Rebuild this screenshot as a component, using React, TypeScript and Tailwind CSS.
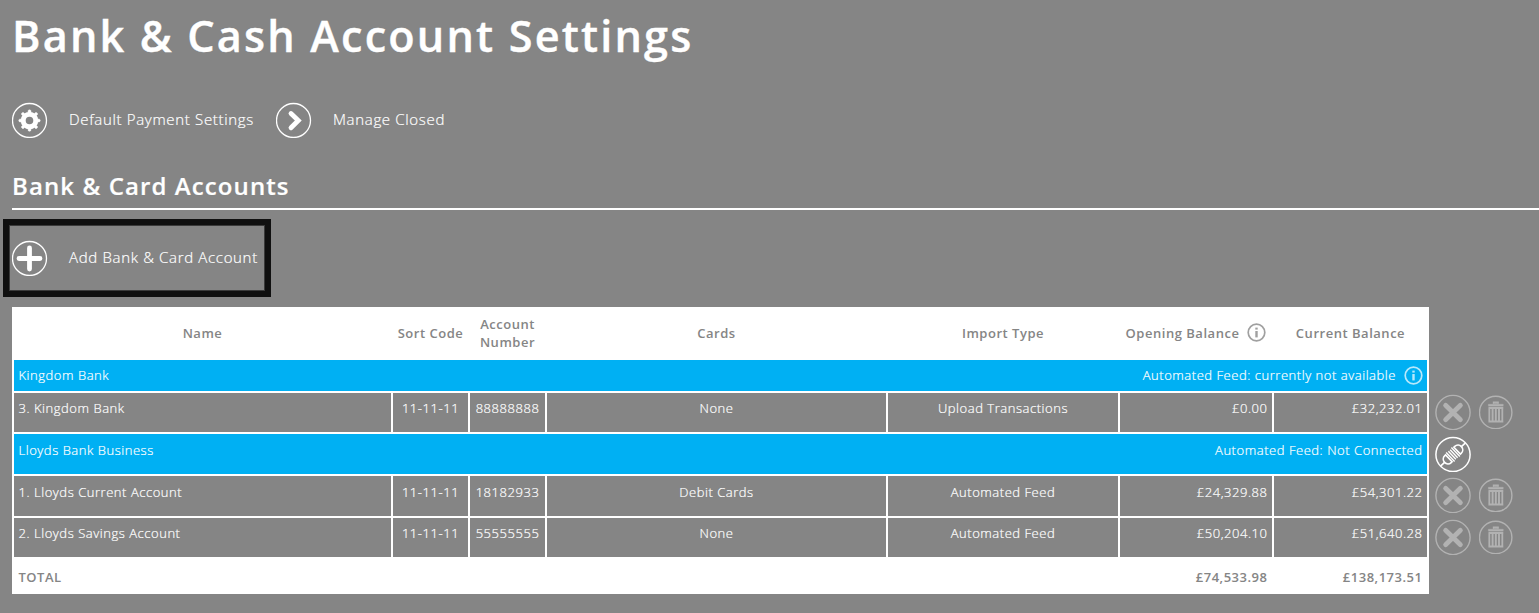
import type { ReactNode } from "react";

const cols = "grid grid-cols-[377px_75px_75px_339px_230px_152px_153px] gap-x-[2px]";
const light = "font-light tracking-[0.54px] [-webkit-text-stroke:0.2px_white]";
const action = "text-[15px] leading-5 font-light tracking-[0.67px] whitespace-nowrap [-webkit-text-stroke:0.2px_white]";

function Ring({ children }: { children: ReactNode }) {
  return (
    <svg width="36" height="36" viewBox="0 0 36 36" fill="none" stroke="currentColor" className="block shrink-0">
      <circle cx="17.5" cy="18.5" r="17" strokeWidth="1.3" />
      {children}
    </svg>
  );
}

function GearIcon() {
  const teeth = [0, 45, 90, 135, 180, 225, 270, 315];
  return (
    <Ring>
      <circle cx="17.5" cy="18.5" r="6.3" strokeWidth="5" />
      {teeth.map((a) => (
        <circle key={a} cx="17.5" cy="9.3" r="1.5" transform={`rotate(${a} 17.5 18.5)`} fill="currentColor" strokeWidth=".5" />
      ))}
    </Ring>
  );
}

function ChevronIcon() {
  return (
    <Ring>
      <path d="M15 11.5l7.3 7-7.3 7.2" strokeWidth="4.8" strokeLinecap="round" />
    </Ring>
  );
}

function PlusIcon() {
  return (
    <Ring>
      <path d="M17.5 8v21M7 18.5h21" strokeWidth="4.8" strokeLinecap="round" />
    </Ring>
  );
}

function InfoIcon() {
  return (
    <svg width="19" height="19" viewBox="0 0 19 19" fill="none" stroke="currentColor" className="block shrink-0">
      <circle cx="9.5" cy="9.5" r="8.3" strokeWidth="1.7" />
      <path d="M9.5 8v6.4" strokeWidth="2.4" />
      <path d="M9.5 4.6v2" strokeWidth="2.4" />
    </svg>
  );
}

function CloseIcon() {
  return (
    <svg width="36" height="36" viewBox="0 0 36 36" fill="none" stroke="currentColor" className="block shrink-0">
      <circle cx="18" cy="18.5" r="17.1" strokeWidth="1.4" />
      <path d="M10.6 11.3l14.8 14.4M25.4 11.3L10.6 25.7" strokeWidth="4.8" strokeLinecap="round" />
    </svg>
  );
}

function TrashIcon() {
  return (
    <svg width="34" height="34" viewBox="0 0 34 34" fill="none" stroke="currentColor" className="block shrink-0">
      <circle cx="16.7" cy="17.5" r="16.2" strokeWidth="1.4" />
      <path d="M9.3 9.2h15v2h-15z" fill="currentColor" strokeWidth=".3" />
      <path d="M14.4 8.7V7.2h4.8v1.5" fill="currentColor" strokeWidth="1.2" />
      <path d="M10.3 12.8v13.8h13V12.8M9.5 13h14.8M9.5 26.5h14.8" strokeWidth="1.8" />
      <path d="M13.6 13V26.5M16.8 13V26.5M20 13V26.5" strokeWidth="1.9" />
    </svg>
  );
}

function PlugIcon() {
  return (
    <svg width="36" height="36" viewBox="0 0 36 36" fill="none" stroke="currentColor" className="block shrink-0">
      <circle cx="18" cy="18.5" r="17.1" strokeWidth="1.5" />
      <g transform="rotate(-43 18 18.5)" strokeWidth="1.6">
        <path d="M1 18.5h5.5M29.5 18.5H35" />
        <path d="M12.3 13.8h-1.1c-2.9 0-4.7 2.1-4.7 4.7s1.8 4.7 4.7 4.7h1.1z" />
        <path d="M23.7 13.8h1.1c2.9 0 4.7 2.1 4.7 4.7s-1.8 4.7-4.7 4.7h-1.1z" />
        <path d="M14.4 12.3v12.4M21.6 12.3v12.4M16.8 13v11M19.2 13v11" strokeWidth="1.4" />
      </g>
    </svg>
  );
}

function RowActions() {
  return (
    <div className="flex h-9 items-center gap-2 text-[#b2b2b2]">
      <CloseIcon />
      <TrashIcon />
    </div>
  );
}

type Account = { name: string; sort: string; num: string; cards: string; type: string; open: string; current: string };

function AccountRow({ a, size }: { a: Account; size: string }) {
  return (
    <div className={`${cols} ${size} ${light} text-white *:bg-[#858585] *:px-[4.5px]`}>
      <div>{a.name}</div>
      <div className="text-center">{a.sort}</div>
      <div className="text-center">{a.num}</div>
      <div className="text-center">{a.cards}</div>
      <div className="text-center">{a.type}</div>
      <div className="text-right">{a.open}</div>
      <div className="text-right">{a.current}</div>
    </div>
  );
}

const kingdom = { name: "3. Kingdom Bank", sort: "11-11-11", num: "88888888", cards: "None", type: "Upload Transactions", open: "£0.00", current: "£32,232.01" };
const lloydsCurrent = { name: "1. Lloyds Current Account", sort: "11-11-11", num: "18182933", cards: "Debit Cards", type: "Automated Feed", open: "£24,329.88", current: "£54,301.22" };
const lloydsSavings = { name: "2. Lloyds Savings Account", sort: "11-11-11", num: "55555555", cards: "None", type: "Automated Feed", open: "£50,204.10", current: "£51,640.28" };

export default function App() {
  return (
    <main className="h-[613px] w-[1539px] overflow-hidden bg-[#858585] pl-3 font-['Open_Sans',sans-serif] text-white">
      <h1 className="h-[102px] pt-[6px] text-[43.2px] leading-[60px] font-semibold tracking-[2.18px] whitespace-nowrap [-webkit-text-stroke:0.4px_white]">
        Bank &amp; Cash Account Settings
      </h1>
      <nav className={`flex h-9 items-center ${action}`}>
        <a className="flex w-[264px] items-center gap-[21px]">
          <GearIcon />
          <span className="pb-[2px]">Default Payment Settings</span>
        </a>
        <a className="flex items-center gap-[21px]">
          <ChevronIcon />
          <span className="pb-[2px]">Manage Closed</span>
        </a>
      </nav>
      <h2 className="mt-8 h-[40px] border-b-2 border-white text-[24px] leading-[32px] font-semibold tracking-[1.1px] [-webkit-text-stroke:0.2px_white]">
        Bank &amp; Card Accounts
      </h2>
      <div className={`mt-[9px] -ml-[9px] flex h-[78px] w-[268px] items-center gap-[21px] border-[6px] border-[#101010] pl-[3px] shadow-[inset_0_0_0_1px_#101010a0] ${action}`}>
        <PlusIcon />
        <span className="pb-[2px]">Add Bank &amp; Card Account</span>
      </div>

      <div className="mt-[10px] flex gap-[6px]">
        <section className="flex h-[287px] w-[1417px] flex-col gap-[2px] bg-white px-[2px] text-[13px] leading-[18px] tracking-[0.52px]">
          <div className={`${cols} h-[51px] items-center text-center font-semibold text-[#858585]`}>
            <div>Name</div>
            <div>Sort Code</div>
            <div>Account Number</div>
            <div>Cards</div>
            <div>Import Type</div>
            <div className="flex items-center justify-center gap-2 whitespace-nowrap">
              Opening Balance
              <span className="text-[#a0a0a0]"><InfoIcon /></span>
            </div>
            <div>Current Balance</div>
          </div>
          <div className={`flex h-[31px] items-center justify-between bg-[#00b0f3] pr-[4px] pl-[4.5px] ${light}`}>
            <span className="pb-px">Kingdom Bank</span>
            <span className="flex items-center gap-2">
              <span className="pb-px">Automated Feed: currently not available</span>
              <span className="text-[#b8e8fb]"><InfoIcon /></span>
            </span>
          </div>
          <AccountRow a={kingdom} size="h-[39px] *:pt-[6px]" />
          <div className={`flex h-[40px] justify-between bg-[#00b0f3] px-[4.5px] pt-[7px] ${light}`}>
            <span>Lloyds Bank Business</span>
            <span>Automated Feed: Not Connected</span>
          </div>
          <AccountRow a={lloydsCurrent} size="h-[40px] *:pt-[7px]" />
          <AccountRow a={lloydsSavings} size="h-[39px] *:pt-[6px]" />
          <div className={`${cols} h-[35px] items-center font-semibold text-[#858585] *:px-[4.5px]`}>
            <div className="col-span-5">TOTAL</div>
            <div className="text-right">£74,533.98</div>
            <div className="text-right">£138,173.51</div>
          </div>
        </section>
        <aside className="flex flex-col gap-[6px] pt-[87px]">
          <RowActions />
          <PlugIcon />
          <div className="-mt-px"><RowActions /></div>
          <RowActions />
        </aside>
      </div>
    </main>
  );
}
